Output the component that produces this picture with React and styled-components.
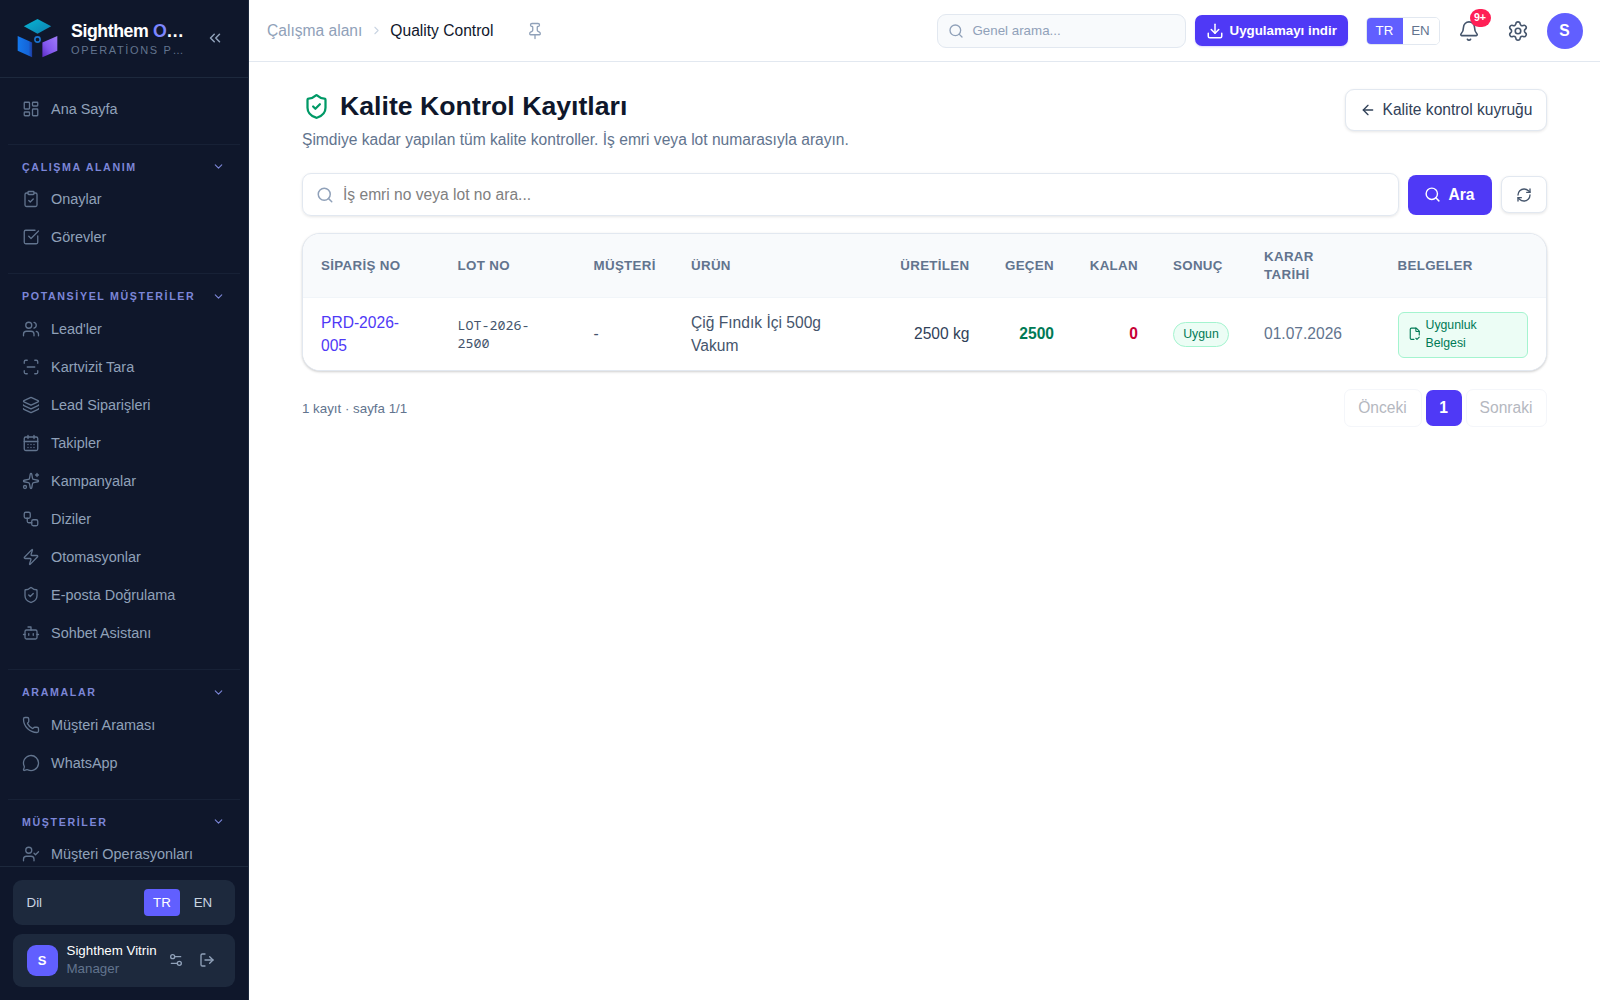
import React from "react";
import styled, { createGlobalStyle } from "styled-components";
import {
  LayoutDashboard, ClipboardCheck, SquareCheckBig, Users, ScanLine, Layers, CalendarDays, Sparkles,
  Workflow, Zap, ShieldCheck, Bot, Phone, MessageCircle, UserCheck, ChevronDown, ChevronsLeft,
  ChevronRight, Pin, Search, Download, Bell, Settings, ArrowLeft, RefreshCw, Settings2, LogOut,
} from "lucide-react";

const Global = createGlobalStyle`
  *, *::before, *::after { box-sizing: border-box; }
  body { margin: 0; background: #fff; font-family: "Liberation Sans", Arial, sans-serif; color: #0f172b; overflow: hidden; }
  button, input { font: inherit; margin: 0; }
  svg { flex: none; display: block; }
`;

const Shell = styled.div`display: flex; width: 1600px; height: 1000px; background: #fff;`;
const Sidebar = styled.aside`
  width: 249px; flex: none; height: 1000px; display: flex; flex-direction: column;
  background: #0f172b; border-right: 1px solid #1d293d; overflow: hidden;
`;
const Brand = styled.div`
  height: 78px; flex: none; display: flex; align-items: center; padding: 0 20px 0 17px;
  border-bottom: 1px solid #1d293d;
`;
const BrandText = styled.div`margin-left: 13px; width: 120px; white-space: nowrap; overflow: hidden;`;
const BrandName = styled.div`
  font-size: 17.78px; line-height: 22px; font-weight: 700; letter-spacing: -0.44px; color: #fff;
  span { color: #7c86ff; }
`;
const BrandSub = styled.div`font-size: 11px; line-height: 16px; letter-spacing: 1.65px; color: #62748e;`;
const Collapse = styled.button`
  border: 0; background: none; padding: 0 0 1px; margin-left: 14.5px; color: #90a1b9; width: 18px; cursor: pointer;
`;
const Nav = styled.nav`flex: 1; min-height: 0; overflow: hidden; padding: 10.5px 8px 0;`;
const Section = styled.div`
  border-top: 1px solid ${(p) => (p.$first ? "transparent" : "#172136")};
  padding-bottom: ${(p) => (p.$first ? "16.4px" : "17.1px")};
`;
const SectionHead = styled.div`
  height: 35.1px; padding: 8.8px 15px 0 14px; display: flex; align-items: center; justify-content: space-between;
  font-size: 10.67px; font-weight: 700; letter-spacing: 1.62px; color: #7c86d8;
`;
const NavItem = styled.a`
  height: 38.1px; display: flex; align-items: center; gap: 11px; padding-left: 14px;
  font-size: 14.44px; color: #90a1b9; white-space: nowrap;
  svg { color: #62748e; }
`;
const Foot = styled.div`
  flex: none; height: 134px; border-top: 1px solid #1d293d; padding: 13px;
  display: flex; flex-direction: column; gap: 9px;
`;
const FootCard = styled.div`
  height: ${(p) => p.$h}px; border-radius: 9px; background: #1d293d; display: flex; align-items: center;
  padding: 0 9px 0 13.5px; font-size: 13.33px; color: #cad5e2;
`;
const Spacer = styled.div`flex: 1;`;
const SideLang = styled.span`
  height: 27px; width: ${(p) => (p.$on ? 36 : 46)}px; display: flex; align-items: center; justify-content: center;
  border-radius: 4px; background: ${(p) => (p.$on ? "#615fff" : "transparent")}; color: ${(p) => (p.$on ? "#fff" : "#cad5e2")};
`;
const UserTile = styled.div`
  width: 31px; height: 31px; border-radius: 9px; background: #615fff; color: #fff; font-weight: 700;
  display: flex; align-items: center; justify-content: center; font-size: 13px;
`;
const UserText = styled.div`
  margin-left: 9px; width: 93px; line-height: 18px; white-space: nowrap; color: #fff;
  small { display: block; font-size: 13.33px; color: #62748e; }
`;
const FootIcons = styled.div`display: flex; gap: 15px; margin-left: 8px; color: #90a1b9;`;

const Main = styled.main`flex: 1; min-width: 0; display: flex; flex-direction: column;`;
const Topbar = styled.header`
  height: 62px; flex: none; border-bottom: 1px solid #e2e8f0; display: flex; align-items: center; padding: 0 17.5px 0 18px;
`;
const Crumbs = styled.div`
  display: flex; align-items: center; font-size: 15.6px; color: #90a1b9;
  b { font-weight: 400; color: #0f172b; margin-left: 7.5px; }
  svg { color: #cad5e2; margin-left: 7.5px; }
`;
const PinIcon = styled.span`margin-left: 33px; color: #90a1b9;`;
const GlobalSearch = styled.div`
  width: 249px; height: 34px; border: 1px solid #e2e8f0; border-radius: 9px; background: #f8fafc;
  display: flex; align-items: center; gap: 9px; padding-left: 10px; font-size: 13.33px; color: #90a1b9;
`;
const DownloadBtn = styled.button`
  width: 153px; height: 31px; margin-left: 9px; border: 0; border-radius: 7px; background: #4f39f6; color: #fff;
  font-size: 13.33px; font-weight: 700; display: flex; align-items: center; gap: 6px; padding: 0 0 0 11px; white-space: nowrap;
  box-shadow: 0 1px 2px rgba(79, 57, 246, 0.2);
`;
const LangToggle = styled.div`
  margin-left: 18px; width: 74px; height: 28px; border: 1px solid #e2e8f0; border-radius: 5px; overflow: hidden; display: flex;
  font-size: 13.33px;
`;
const LangOption = styled.span`
  flex: 1; display: flex; align-items: center; justify-content: center;
  background: ${(p) => (p.$on ? "#615fff" : "#fff")}; color: ${(p) => (p.$on ? "#fff" : "#62748e")};
`;
const BellWrap = styled.div`position: relative; margin-left: 18px; color: #45556c;`;
const Badge = styled.span`
  position: absolute; left: 12px; top: -11px; width: 21px; height: 18px; border-radius: 9px; background: #ff2056; color: #fff;
  font-size: 10.67px; font-weight: 700; display: flex; align-items: center; justify-content: center; padding-bottom: 1px;
`;
const Gear = styled.div`margin-left: 27px; color: #45556c;`;
const Avatar = styled.div`
  margin-left: 18px; width: 36px; height: 36px; border-radius: 50%; background: #615fff; color: #fff; font-weight: 700; font-size: 15.6px;
  display: flex; align-items: center; justify-content: center;
`;

const Content = styled.div`padding: 27px 53.5px 0 53px;`;
const PageHead = styled.div`display: flex; justify-content: space-between; align-items: flex-start; height: 84px;`;
const Title = styled.h1`
  margin: 0; display: flex; align-items: center; gap: 10px; padding-left: 1px; font-size: 26.67px; line-height: 34px; font-weight: 700; color: #0f172b;
  svg { color: #009966; }
`;
const Subtitle = styled.p`margin: 5px 0 0; font-size: 15.6px; line-height: 24px; color: #62748e;`;
const BackBtn = styled.button`
  width: 202px; height: 42px; border: 1px solid #e2e8f0; border-radius: 9px; background: #fff; color: #314158; font-size: 15.6px;
  display: flex; align-items: center; gap: 7px; padding: 0 0 0 14px; white-space: nowrap; box-shadow: 0 1px 3px rgba(0, 0, 0, 0.1);
`;
const SearchRow = styled.div`display: flex; align-items: center; gap: 9px;`;
const SearchBox = styled.div`
  flex: 1; height: 43px; border: 1px solid #e2e8f0; border-radius: 9px; display: flex; align-items: center; gap: 9px; padding-left: 13px;
  font-size: 15.6px; color: #808080; box-shadow: 0 1px 3px rgba(0, 0, 0, 0.1);
  svg { color: #90a1b9; }
`;
const SearchBtn = styled.button`
  width: 84px; height: 40px; border: 0; border-radius: 8px; background: #4f39f6; color: #fff; font-weight: 700; font-size: 15.6px;
  display: flex; align-items: center; justify-content: center; gap: 7px; padding: 0;
`;
const RefreshBtn = styled.button`
  width: 46px; height: 37px; border: 1px solid #e2e8f0; border-radius: 8px; background: #fff; color: #45556c; padding: 0;
  display: flex; align-items: center; justify-content: center; box-shadow: 0 1px 3px rgba(0, 0, 0, 0.1);
`;
const TableCard = styled.div`
  margin-top: 17px; height: 138px; border: 1px solid #e2e8f0; border-radius: 18px; overflow: hidden; background: #fff;
  box-shadow: 0 1px 3px rgba(0, 0, 0, 0.12), 0 1px 2px rgba(0, 0, 0, 0.08);
`;
const Row = styled.div`
  display: grid; grid-template-columns: 136.5px 136px 97.5px 190.5px 123px 84.5px 84px 91px 133.5px 1fr; align-items: center;
  height: ${(p) => (p.$head ? 64 : 73)}px;
  background: ${(p) => (p.$head ? "#f8fafc" : "#fff")};
  border-bottom: ${(p) => (p.$head ? "1px solid #f1f5f9" : "0")};
  font-size: ${(p) => (p.$head ? 13.33 : 15.6)}px; line-height: ${(p) => (p.$head ? 17.78 : 22.2)}px;
  font-weight: ${(p) => (p.$head ? 700 : 400)}; letter-spacing: ${(p) => (p.$head ? "0.33px" : "0")};
  color: ${(p) => (p.$head ? "#62748e" : "#45556c")};
`;
const Cell = styled.div`
  padding: 0 17px 0 18px; text-align: ${(p) => (p.$num ? "right" : "left")};
  white-space: ${(p) => (p.$num ? "nowrap" : "normal")};
  color: ${(p) => p.$color || "inherit"}; font-weight: ${(p) => (p.$bold ? 700 : "inherit")};
`;
const Mono = styled.span`
  font-family: "Noto Sans Mono", "DejaVu Sans Mono", monospace; font-size: 13.33px; line-height: 17.78px;
  display: block; color: #45556c;
`;
const Status = styled.span`
  width: 56px; height: 25px; border: 1px solid #a4f4cf; border-radius: 13px; background: #ecfdf5; color: #007a55; font-size: 12.3px;
  display: flex; align-items: center; justify-content: center;
`;
const DocLink = styled.a`
  width: 130px; height: 46px; border: 1px solid #a4f4cf; border-radius: 6px; background: #ecfdf5; color: #007a55; font-size: 12.3px; line-height: 18px;
  display: flex; align-items: center; gap: 4.5px; padding: 0 0 1px 9px;
`;
const Pager = styled.div`display: flex; align-items: center; margin-top: 18px; font-size: 13.33px; color: #62748e;`;
const PageBtn = styled.button`
  width: ${(p) => p.$w}px; height: ${(p) => (p.$on ? 36 : 38)}px; border-radius: 7px; padding: 0; font-size: 15.6px;
  border: ${(p) => (p.$on ? "0" : "1px solid #f4f6fa")}; background: ${(p) => (p.$on ? "#4f39f6" : "#fff")};
  color: ${(p) => (p.$on ? "#fff" : "#b5b8bf")}; font-weight: ${(p) => (p.$on ? 700 : 400)};
  margin-left: ${(p) => p.$gap || 0}px;
`;

const Logo = () => (
  <svg width="41" height="42" viewBox="0 0 42 42">
    <defs>
      <linearGradient id="lt" x1="0" y1="0" x2="1" y2="1"><stop offset="0" stopColor="#06b6d4" /><stop offset="1" stopColor="#0e7fb0" /></linearGradient>
      <linearGradient id="ll" x1="0" y1="0" x2="1" y2="0"><stop offset="0" stopColor="#1479ee" /><stop offset="0.75" stopColor="#1565d8" /><stop offset="1" stopColor="#1e3a9f" /></linearGradient>
      <linearGradient id="lr" x1="1" y1="0" x2="0" y2="1"><stop offset="0" stopColor="#a07cf8" /><stop offset="0.6" stopColor="#8257ee" /><stop offset="1" stopColor="#5b2bc4" /></linearGradient>
    </defs>
    <path d="M21 0.5 35 8 21 15.5 7 8Z" fill="url(#lt)" />
    <path d="M0.700 18 15.500 24.500V39.800L0.700 33Z" fill="url(#ll)" />
    <path d="M41.300 18 26 24.500V39.800L41.300 33Z" fill="url(#lr)" />
    <circle cx="21" cy="21.5" r="2.7" fill="none" stroke="#1b74cf" strokeWidth="1.6" />
  </svg>
);

const FileCheckCorner = () => (
  <svg width="13.5" height="13.5" viewBox="0 0 24 24" fill="none" stroke="currentColor" strokeWidth="2" strokeLinecap="round" strokeLinejoin="round">
    <path d="M10.5 22H6a2 2 0 0 1-2-2V4a2 2 0 0 1 2-2h8a2.4 2.4 0 0 1 1.706.706l3.588 3.588A2.4 2.4 0 0 1 20 8v6" />
    <path d="M14 2v5a1 1 0 0 0 1 1h5" />
    <path d="m14 20 2 2 4-4" />
  </svg>
);

const sections = [
  { items: [[LayoutDashboard, "Ana Sayfa"]] },
  { title: "ÇALIŞMA ALANIM", items: [[ClipboardCheck, "Onaylar"], [SquareCheckBig, "Görevler"]] },
  {
    title: "POTANSİYEL MÜŞTERİLER",
    items: [
      [Users, "Lead'ler"], [ScanLine, "Kartvizit Tara"], [Layers, "Lead Siparişleri"], [CalendarDays, "Takipler"],
      [Sparkles, "Kampanyalar"], [Workflow, "Diziler"], [Zap, "Otomasyonlar"], [ShieldCheck, "E-posta Doğrulama"], [Bot, "Sohbet Asistanı"],
    ],
  },
  { title: "ARAMALAR", items: [[Phone, "Müşteri Araması"], [MessageCircle, "WhatsApp"]] },
  { title: "MÜŞTERİLER", items: [[UserCheck, "Müşteri Operasyonları"]] },
];

export default function App() {
  return (
    <Shell>
      <Global />
      <Sidebar>
        <Brand>
          <Logo />
          <BrandText>
            <BrandName>Sighthem <span>O</span>…</BrandName>
            <BrandSub>OPERATİONS P…</BrandSub>
          </BrandText>
          <Collapse><ChevronsLeft size={18} /></Collapse>
        </Brand>
        <Nav>
          {sections.map((s, i) => (
            <Section key={i} $first={!s.title}>
              {s.title && <SectionHead>{s.title}<ChevronDown size={13} /></SectionHead>}
              {s.items.map(([Icon, label]) => (
                <NavItem key={label}><Icon size={18} strokeWidth={1.75} />{label}</NavItem>
              ))}
            </Section>
          ))}
        </Nav>
        <Foot>
          <FootCard $h={45}>Dil<Spacer /><SideLang $on>TR</SideLang><SideLang>EN</SideLang></FootCard>
          <FootCard $h={54}>
            <UserTile>S</UserTile>
            <UserText>Sighthem Vitrin<small>Manager</small></UserText>
            <FootIcons><Settings2 size={16} /><LogOut size={16} /></FootIcons>
          </FootCard>
        </Foot>
      </Sidebar>
      <Main>
        <Topbar>
          <Crumbs>Çalışma alanı<ChevronRight size={13} /><b>Quality Control</b></Crumbs>
          <PinIcon><Pin size={18} strokeWidth={1.75} /></PinIcon>
          <Spacer />
          <GlobalSearch><Search size={16} />Genel arama...</GlobalSearch>
          <DownloadBtn><Download size={18} />Uygulamayı indir</DownloadBtn>
          <LangToggle><LangOption $on>TR</LangOption><LangOption>EN</LangOption></LangToggle>
          <BellWrap><Bell size={22} strokeWidth={1.75} /><Badge>9+</Badge></BellWrap>
          <Gear><Settings size={22} strokeWidth={1.75} /></Gear>
          <Avatar>S</Avatar>
        </Topbar>
        <Content>
          <PageHead>
            <div>
              <Title><ShieldCheck size={27} />Kalite Kontrol Kayıtları</Title>
              <Subtitle>Şimdiye kadar yapılan tüm kalite kontroller. İş emri veya lot numarasıyla arayın.</Subtitle>
            </div>
            <BackBtn><ArrowLeft size={16} />Kalite kontrol kuyruğu</BackBtn>
          </PageHead>
          <SearchRow>
            <SearchBox><Search size={18} />İş emri no veya lot no ara...</SearchBox>
            <SearchBtn><Search size={17} />Ara</SearchBtn>
            <RefreshBtn><RefreshCw size={16} /></RefreshBtn>
          </SearchRow>
          <TableCard>
            <Row $head>
              <Cell>SİPARİŞ NO</Cell><Cell>LOT NO</Cell><Cell>MÜŞTERİ</Cell><Cell>ÜRÜN</Cell>
              <Cell $num>ÜRETİLEN</Cell><Cell $num>GEÇEN</Cell><Cell $num>KALAN</Cell>
              <Cell>SONUÇ</Cell><Cell>KARAR TARİHİ</Cell><Cell>BELGELER</Cell>
            </Row>
            <Row>
              <Cell $color="#4f39f6">PRD-2026-005</Cell>
              <Cell><Mono>LOT-2026-2500</Mono></Cell>
              <Cell>-</Cell>
              <Cell>Çiğ Fındık İçi 500g Vakum</Cell>
              <Cell $num $color="#314158">2500 kg</Cell>
              <Cell $num $bold $color="#007a55">2500</Cell>
              <Cell $num $bold $color="#c70036">0</Cell>
              <Cell><Status>Uygun</Status></Cell>
              <Cell $color="#62748e">01.07.2026</Cell>
              <Cell><DocLink><FileCheckCorner /><span>Uygunluk<br />Belgesi</span></DocLink></Cell>
            </Row>
          </TableCard>
          <Pager>
            1 kayıt · sayfa 1/1
            <Spacer />
            <PageBtn $w={78}>Önceki</PageBtn>
            <PageBtn $w={36} $on $gap={4}>1</PageBtn>
            <PageBtn $w={81} $gap={4}>Sonraki</PageBtn>
          </Pager>
        </Content>
      </Main>
    </Shell>
  );
}
